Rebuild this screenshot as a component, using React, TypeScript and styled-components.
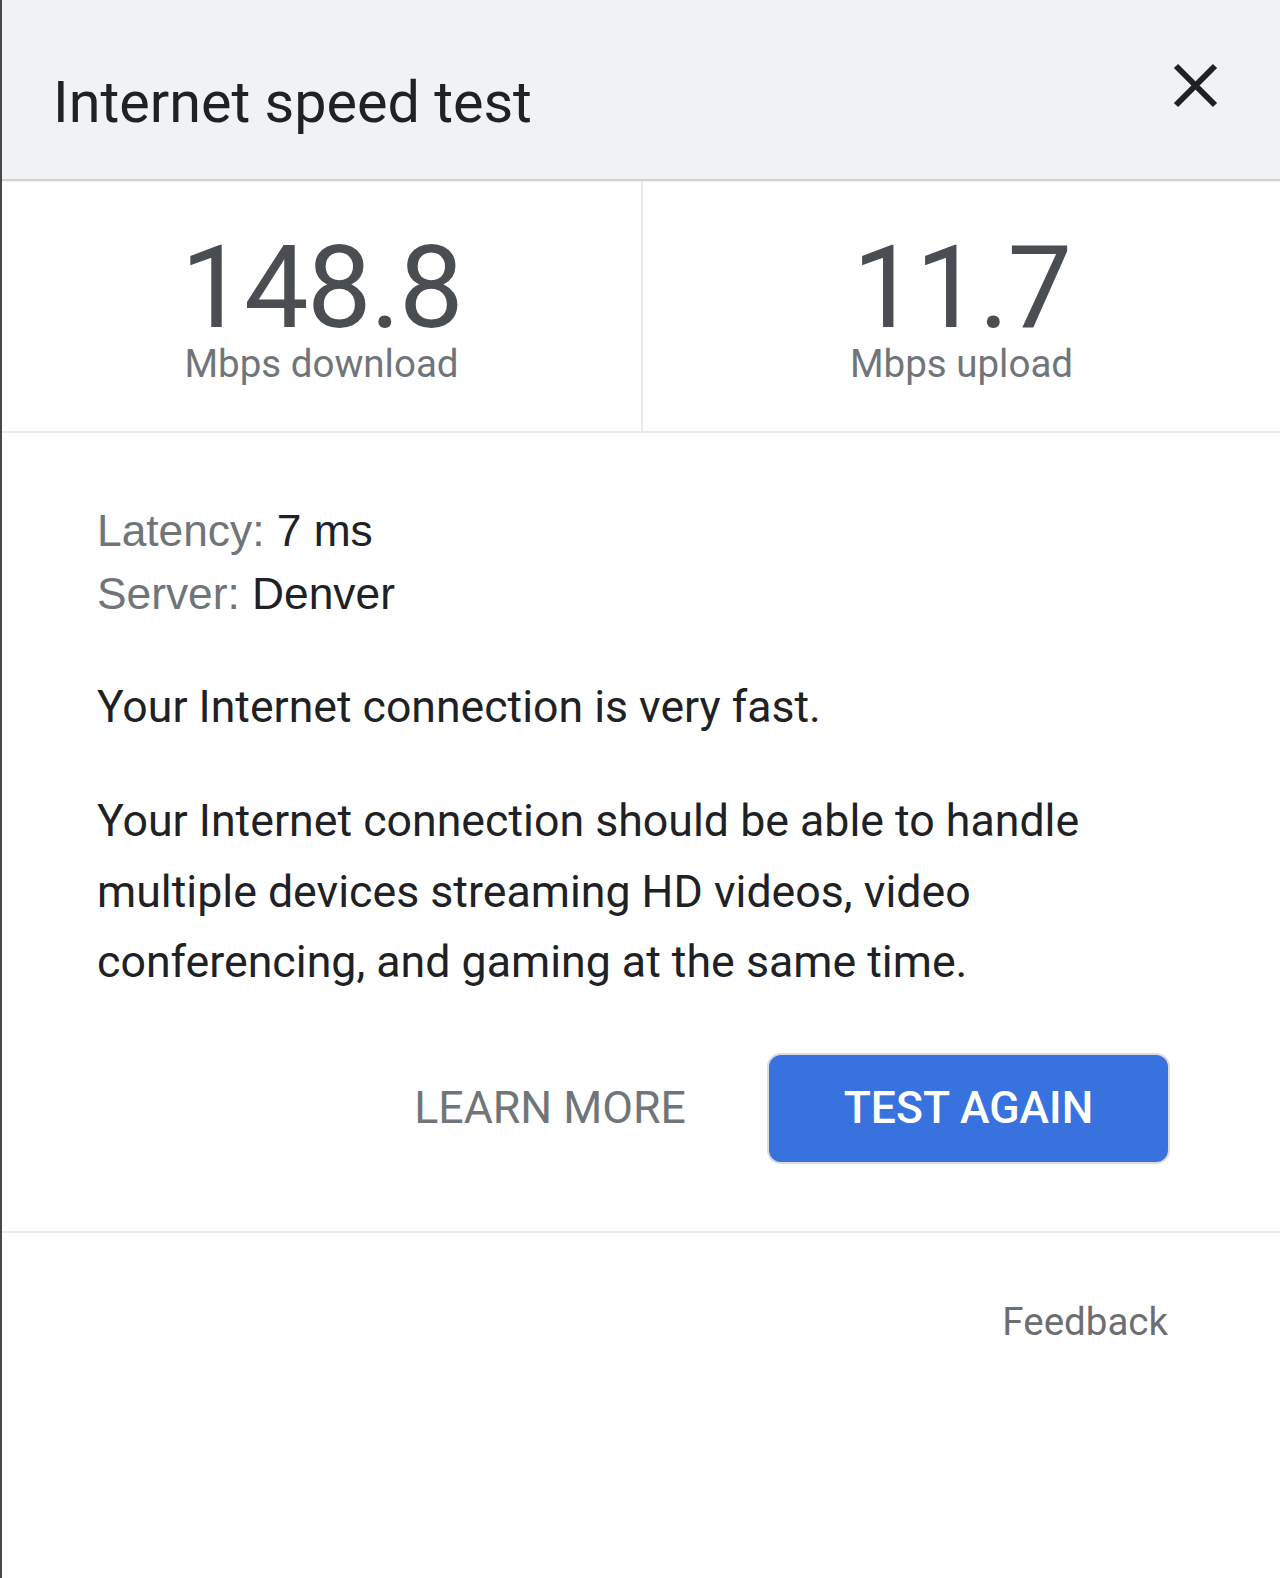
import React from "react";
import styled, { createGlobalStyle } from "styled-components";

const Global = createGlobalStyle`
  html, body { margin: 0; padding: 0; background: #ffffff; }
  body {
    font-family: Roboto, "Liberation Sans", Arial, sans-serif;
    -webkit-font-smoothing: antialiased;
  }
  * { box-sizing: border-box; }
`;

const Page = styled.div`
  min-height: 1578px;
  border-left: 2px solid #46484b;
  background: #ffffff;
  display: flex;
  flex-direction: column;
`;

const Header = styled.header`
  height: 181px;
  background: #f1f2f4;
  border-bottom: 2px solid #d2d3d5;
  box-shadow: 0 1px 1px rgba(0, 0, 0, 0.05);
  display: flex;
  justify-content: space-between;
  align-items: flex-start;
  padding: 0 62px 0 51px;
`;

const Title = styled.h1`
  margin: 69px 0 0;
  font-family: Roboto, sans-serif;
  font-size: 57.5px;
  line-height: 68px;
  font-weight: 400;
  color: #202124;
`;

const CloseButton = styled.button`
  margin-top: 63px;
  width: 45px;
  height: 45px;
  padding: 0;
  border: none;
  background: none;
  display: flex;
  cursor: pointer;
`;

const Stats = styled.section`
  display: grid;
  grid-template-columns: 1fr 1fr;
  border-bottom: 2px solid #e8eaed;
`;

const Stat = styled.div<{ $divider?: boolean }>`
  display: flex;
  flex-direction: column;
  align-items: center;
  padding: 54.5px 0 45px;
  border-left: ${(p) => (p.$divider ? "2px solid #e8eaed" : "none")};
`;

const StatValue = styled.div`
  font-family: Roboto, sans-serif;
  font-size: 115px;
  line-height: 104px;
  letter-spacing: -1.5px;
  color: #4a4d51;
`;

const StatLabel = styled.div`
  margin-top: 2.5px;
  font-family: Roboto, sans-serif;
  font-size: 38.5px;
  line-height: 44px;
  color: #70757a;
`;

const Body = styled.main`
  padding: 66px 110px 67px 95px;
`;

const InfoLine = styled.div`
  font-family: "Liberation Sans", Arial, sans-serif;
  font-size: 44.3px;
  line-height: 63px;
  color: #202124;
`;

const InfoLabel = styled.span`
  color: #70757a;
`;

const Verdict = styled.p`
  margin: 47px 0 0;
  font-family: Roboto, sans-serif;
  font-size: 44.6px;
  line-height: 70px;
  color: #202124;
`;

const Detail = styled.p`
  margin: 44px 0 0;
  font-family: Roboto, sans-serif;
  font-size: 44.7px;
  line-height: 70.5px;
  color: #202124;
`;

const Actions = styled.div`
  margin-top: 55px;
  display: flex;
  justify-content: flex-end;
  align-items: center;
  gap: 81px;
`;

const TextButton = styled.button`
  padding: 0;
  border: none;
  background: none;
  font-family: Roboto, sans-serif;
  font-size: 44.7px;
  font-weight: 400;
  color: #70757a;
  cursor: pointer;
`;

const PrimaryButton = styled.button`
  width: 403px;
  height: 111px;
  border-radius: 14px;
  border: 2px solid #dadce0;
  background: #3872de;
  color: #ffffff;
  font-family: Roboto, sans-serif;
  font-size: 44.5px;
  font-weight: 500;
  cursor: pointer;
`;

const Footer = styled.footer`
  border-top: 2px solid #e8eaed;
  padding: 66px 112px 0 0;
  display: flex;
  justify-content: flex-end;
`;

const FeedbackLink = styled.a`
  font-family: Roboto, sans-serif;
  font-size: 38.5px;
  line-height: 46px;
  color: #6b6f74;
  text-decoration: none;
`;

const CloseIcon = () => (
  <svg width="45" height="45" viewBox="0 0 45 45" aria-hidden="true">
    <path d="M3 3 L42 42 M42 3 L3 42" stroke="#202124" strokeWidth="6" strokeLinecap="butt" fill="none" />
  </svg>
);

export default function App() {
  return (
    <>
      <Global />
      <Page>
        <Header>
          <Title>Internet speed test</Title>
          <CloseButton aria-label="Close">
            <CloseIcon />
          </CloseButton>
        </Header>
        <Stats>
          <Stat>
            <StatValue>148.8</StatValue>
            <StatLabel>Mbps download</StatLabel>
          </Stat>
          <Stat $divider>
            <StatValue>11.7</StatValue>
            <StatLabel>Mbps upload</StatLabel>
          </Stat>
        </Stats>
        <Body>
          <InfoLine>
            <InfoLabel>Latency:</InfoLabel> 7 ms
          </InfoLine>
          <InfoLine>
            <InfoLabel>Server:</InfoLabel> Denver
          </InfoLine>
          <Verdict>Your Internet connection is very fast.</Verdict>
          <Detail>
            Your Internet connection should be able to handle multiple devices streaming HD videos, video
            conferencing, and gaming at the same time.
          </Detail>
          <Actions>
            <TextButton>LEARN MORE</TextButton>
            <PrimaryButton>TEST AGAIN</PrimaryButton>
          </Actions>
        </Body>
        <Footer>
          <FeedbackLink href="#">Feedback</FeedbackLink>
        </Footer>
      </Page>
    </>
  );
}
